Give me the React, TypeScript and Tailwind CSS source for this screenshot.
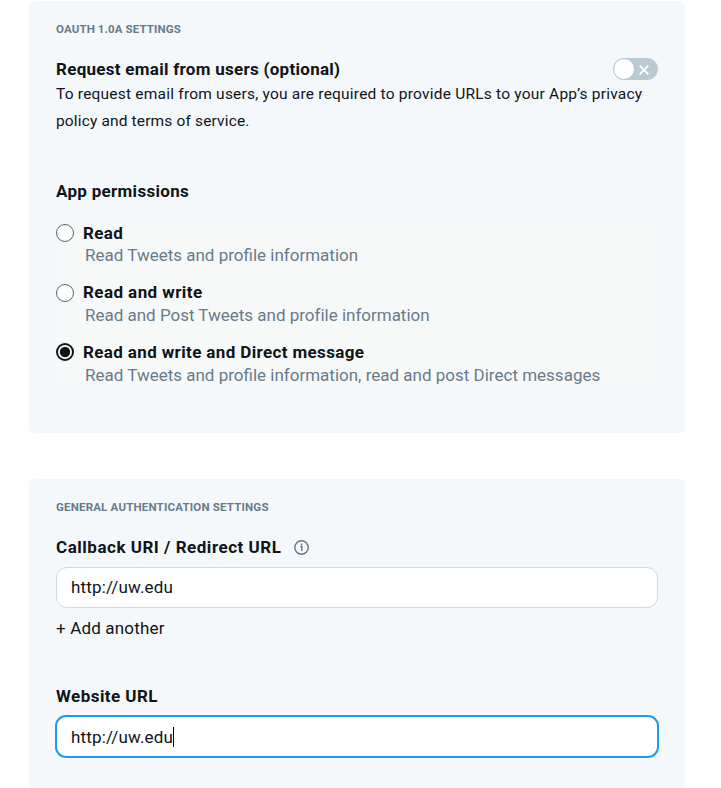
const permissions = [
  { label: "Read", labelClass: "pt-0.5 tracking-[0.4px]", detail: "Read Tweets and profile information", detailClass: "leading-5 tracking-[0px]", height: "h-[60px]", checked: false },
  { label: "Read and write", labelClass: "tracking-[0.43px]", detail: "Read and Post Tweets and profile information", detailClass: "leading-5 tracking-[-0.01px]", height: "h-[59px]", checked: false },
  { label: "Read and write and Direct message", labelClass: "pt-0.5 tracking-[0.37px]", detail: "Read Tweets and profile information, read and post Direct messages", detailClass: "leading-[22px] tracking-[0px]", height: "h-[46px]", checked: true },
];

function Toggle() {
  return (
    <div className="flex h-[22px] w-[45px] items-center rounded-full bg-[#b9cad3] pl-px">
      <div className="size-5 rounded-full bg-white" />
      <svg className="mt-px ml-[5px]" width="10" height="10" viewBox="0 0 10 10" fill="none" stroke="#fff" strokeWidth="1.8">
        <path d="M.7.7l8.6 8.6M9.3.7L.7 9.3" />
      </svg>
    </div>
  );
}

function Radio({ checked }: { checked: boolean }) {
  return (
    <svg width="18" height="18" viewBox="0 0 18 18">
      <circle cx="9" cy="9" r={checked ? 8 : 8.5} fill="#fff" stroke={checked ? "#0f1419" : "#536471"} strokeWidth={checked ? 2 : 1} />
      {checked && <circle cx="9" cy="9" r="5.2" fill="#0f1419" />}
    </svg>
  );
}

function InfoIcon() {
  return (
    <svg width="15" height="15" viewBox="0 0 15 15" fill="none" stroke="#657786">
      <circle cx="7.5" cy="7.5" r="6.7" strokeWidth="1.4" />
      <path d="M6.2 6.8h1.6V11" strokeWidth="1.4" />
      <circle cx="7.6" cy="4.5" r=".9" fill="#657786" stroke="none" />
    </svg>
  );
}

export default function App() {
  return (
    <main className="flex h-[788px] w-[721px] flex-col gap-[46px] overflow-hidden bg-white pt-px pl-[29px] font-[Roboto,'Liberation_Sans',sans-serif] text-[17px] text-[#0f1419]">
      <section className="h-[432px] w-[656px] shrink-0 rounded-[5px] bg-[#f5f8fb] px-[27px] pt-[18px]">
        <h2 className="h-5 text-[11.5px] leading-5 font-bold tracking-[0.12px] whitespace-nowrap text-[#687b8a]"><span>OAUTH 1.0A SETTINGS</span></h2>
        <div className="mt-[18px] flex h-6 items-center justify-between">
          <h3 className="leading-6 font-bold tracking-[0.28px] whitespace-nowrap">Request email from users (optional)</h3>
          <Toggle />
        </div>
        <p className="text-[15.5px] leading-[27px] whitespace-nowrap">
          <span className="tracking-[0.215px]">To request email from users, you are required to provide URLs to your App’s privacy</span>
          <br />
          <span className="tracking-[0.15px]">policy and terms of service.</span>
        </p>
        <h3 className="mt-11 leading-6 font-bold tracking-[0.3px] whitespace-nowrap"><span>App permissions</span></h3>
        <div className="mt-[18px] flex h-[165px] w-[602px] flex-col bg-[#f7f9f9]">
          {permissions.map((p) => (
            <div key={p.label} className={`shrink-0 whitespace-nowrap ${p.height}`}>
              <div className="flex h-6 items-center gap-[9px]">
                <Radio checked={p.checked} />
                <span className={`font-bold ${p.labelClass}`}>{p.label}</span>
              </div>
              <div className={`pl-[29px] text-[#687b8a] ${p.detailClass}`}>{p.detail}</div>
            </div>
          ))}
        </div>
      </section>
      <section className="h-[330px] w-[656px] shrink-0 rounded-t-[5px] bg-[#f5f8fb] px-[27px] pt-[18px]">
        <h2 className="h-5 text-[11.5px] leading-5 font-bold tracking-[0.19px] whitespace-nowrap text-[#687b8a]"><span>GENERAL AUTHENTICATION SETTINGS</span></h2>
        <div className="mt-[18px] flex h-6 items-center gap-[12.5px]">
          <h3 className="pt-0.5 font-bold tracking-[0.52px] whitespace-nowrap">Callback URI / Redirect URL</h3>
          <InfoIcon />
        </div>
        <div className="mt-2 flex h-[41px] w-[602px] items-center rounded-[11px] border border-[#cfd9de] bg-white px-3.5">
          <span className="tracking-[0.17px]">http://uw.edu</span>
        </div>
        <div className="mt-2 h-6 leading-6"><span className="tracking-[0.17px]">+ Add another</span></div>
        <h3 className="mt-11 h-6 leading-6 font-bold tracking-[0.45px]"><span>Website URL</span></h3>
        <div className="-mx-px mt-[7px] flex h-[43px] w-[604px] items-center rounded-[11px] border-2 border-[#1d9bf0] bg-white px-3.5">
          <span className="pt-0.5 tracking-[0.17px]">http://uw.edu</span>
          <div className="h-5 w-px bg-black" />
        </div>
      </section>
    </main>
  );
}
